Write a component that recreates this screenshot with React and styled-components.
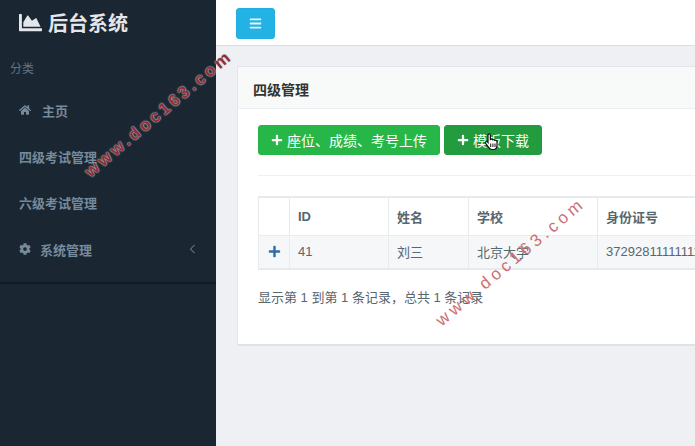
import React from 'react'
import styled, { createGlobalStyle } from 'styled-components'
import { FaChartArea, FaHome, FaCog, FaPlus, FaBars } from 'react-icons/fa'

const fontStack = '"Liberation Sans", "Noto Sans CJK SC", sans-serif'

const Global = createGlobalStyle`
  html, body { margin: 0; padding: 0; }
  body {
    width: 695px;
    height: 446px;
    overflow: hidden;
    font-family: ${fontStack};
    background: #eef0f3;
  }
  * { box-sizing: border-box; }
`

const Page = styled.div`
  position: relative;
  display: flex;
  width: 695px;
  height: 446px;
  overflow: hidden;
`

const Sidebar = styled.aside`
  width: 216px;
  flex: none;
  background: #1a2631;
`
const Brand = styled.div`
  display: flex;
  align-items: center;
  height: 44px;
  padding-left: 19px;
  color: #e3e7ec;
  font-size: 20px;
  font-weight: 700;
  gap: 6px;
  svg { font-size: 23px; }
`
const NavLabel = styled.div`
  padding: 15px 0 0 10px;
  height: 43px;
  font-size: 12px;
  color: #5e7384;
`
const Nav = styled.nav`
  border-bottom: 2px solid #131c25;
  padding-bottom: 10px;
`
const NavItem = styled.div`
  display: flex;
  align-items: center;
  height: 46.3px;
  padding: 0 20px 0 19px;
  font-size: 13px;
  font-weight: 700;
  color: #768a9c;
`
const NavIcon = styled.span`
  display: flex;
  flex: none;
  font-size: 12px;
  margin-right: ${p => p.$gap}px;
`
const Caret = styled.svg`
  margin-left: auto;
`

const Main = styled.main`
  flex: 1;
  min-width: 0;
`
const Topbar = styled.header`
  height: 46px;
  background: #fff;
  border-bottom: 1px solid #dcdfe2;
  padding: 8px 0 0 20px;
`
const MenuButton = styled.button`
  display: flex;
  align-items: center;
  justify-content: center;
  width: 39px;
  height: 31px;
  padding: 0;
  border: 1px solid #23ade0;
  border-radius: 3px;
  background: #23b2e4;
  color: #e6f7fc;
  font-size: 13px;
`
const Content = styled.div`
  padding: 20px 0 0 21px;
`
const Card = styled.section`
  width: 480px;
  height: 280px;
  background: #fff;
  border: 1px solid #e4e7ea;
  border-right: 0;
  border-bottom: 2px solid #dfe2e6;
  border-radius: 2px 0 0 2px;
  overflow: hidden;
`
const CardHead = styled.div`
  display: flex;
  align-items: center;
  height: 42px;
  padding: 3px 0 0 15px;
  background: #f8f9f9;
  border-bottom: 1px solid #edf0f2;
  font-size: 14px;
  font-weight: 700;
  color: #333;
`
const CardBody = styled.div`
  padding: 16px 0 0 20px;
`
const Toolbar = styled.div`
  display: flex;
  gap: 4px;
  padding-bottom: 20px;
  border-bottom: 1px solid #eef0f2;
`
const GreenButton = styled.button`
  display: flex;
  align-items: center;
  height: 30px;
  padding: 0 12px;
  border: 1px solid ${p => p.$hover ? '#249a3f' : '#27b348'};
  border-radius: 3px;
  background: ${p => p.$hover ? '#239b3f' : '#27b748'};
  color: #fff;
  font-family: ${fontStack};
  font-size: 14px;
  white-space: nowrap;
  svg { font-size: 12px; margin-right: 4px; }
`
const Table = styled.table`
  margin-top: 20px;
  border-collapse: collapse;
  table-layout: fixed;
  width: 460px;
  border-bottom: 2px solid #e6eaee;
  color: #58666e;
  font-size: 13px;
`
const Th = styled.th`
  height: 38px;
  padding: 0 8px;
  text-align: left;
  font-size: 13px;
  font-weight: 700;
  border: 1px solid #e8ebee;
  border-top-width: 2px;
  border-right: ${p => p.$last ? 0 : '1px solid #e8ebee'};
  color: #58666e;
  width: ${p => p.$w}px;
`
const Td = styled.td`
  height: 34px;
  padding: 0 8px;
  white-space: nowrap;
  overflow: hidden;
  background: #f6f7f8;
  border: 1px solid #e8ebee;
  border-right: ${p => p.$last ? 0 : '1px solid #e8ebee'};
`
const Expand = styled(Td)`
  color: #2f6ea5;
  text-align: center;
  padding: 0;
  font-size: 13px;
  line-height: 0;
`
const Summary = styled.div`
  margin-top: 17px;
  font-size: 13px;
  color: #58666e;
`

const Watermark = styled.div`
  position: absolute;
  left: ${p => p.$x}px;
  top: ${p => p.$y}px;
  width: 200px;
  text-align: center;
  transform: rotate(-40deg);
  font-family: "Liberation Sans", sans-serif;
  font-size: 17px;
  font-weight: ${p => p.$boxed ? 700 : 400};
  letter-spacing: ${p => p.$boxed ? 3.2 : 4}px;
  white-space: nowrap;
  color: ${p => p.$boxed ? '#8f2f36' : '#cc6f72'};
  text-shadow: ${p => p.$boxed ? '0 0 2px #c3c7cb, 0 0 1px #c3c7cb' : 'none'};
  pointer-events: none;
`
const HandCursor = styled.svg`
  position: absolute;
  left: 484px;
  top: 132px;
`

export default function App() {
  return (
    <Page>
      <Global />
      <Sidebar>
        <Brand><FaChartArea />后台系统</Brand>
        <NavLabel>分类</NavLabel>
        <Nav>
          <NavItem><NavIcon $gap={11}><FaHome /></NavIcon>主页</NavItem>
          <NavItem>四级考试管理</NavItem>
          <NavItem>六级考试管理</NavItem>
          <NavItem>
            <NavIcon $gap={9}><FaCog /></NavIcon>系统管理
            <Caret width="7" height="10" viewBox="0 0 7 10" fill="none">
              <path d="M5.500 1 1.500 5l4 4" stroke="#8095a8" strokeWidth="1" />
            </Caret>
          </NavItem>
        </Nav>
      </Sidebar>
      <Main>
        <Topbar>
          <MenuButton><FaBars /></MenuButton>
        </Topbar>
        <Content>
          <Card>
            <CardHead>四级管理</CardHead>
            <CardBody>
              <Toolbar>
                <GreenButton><FaPlus />座位、成绩、考号上传</GreenButton>
                <GreenButton $hover><FaPlus />模板下载</GreenButton>
              </Toolbar>
              <Table>
                <thead>
                  <tr>
                    <Th $w={31} />
                    <Th $w={99}>ID</Th>
                    <Th $w={80}>姓名</Th>
                    <Th $w={129}>学校</Th>
                    <Th $w={121} $last>身份证号</Th>
                  </tr>
                </thead>
                <tbody>
                  <tr>
                    <Expand><FaPlus /></Expand>
                    <Td>41</Td>
                    <Td>刘三</Td>
                    <Td>北京大学</Td>
                    <Td $last>372928111111111</Td>
                  </tr>
                </tbody>
              </Table>
              <Summary>显示第 1 到第 1 条记录，总共 1 条记录</Summary>
            </CardBody>
          </Card>
        </Content>
      </Main>
      <Watermark $x={59} $y={104} $boxed>www.doc163.com</Watermark>
      <Watermark $x={411} $y={252}>www.doc163.com</Watermark>
      <HandCursor width="16" height="19" viewBox="0 0 16 19">
        <path d="M4 3c0-1.600 2.400-1.600 2.400 0v4.500c.8-.7 2-.5 2.300.3.800-.5 2-.3 2.200.6.800-.4 2.100-.1 2.100 1.100V13c0 2.800-1.500 4.500-3.600 4.500H7.800c-1.500 0-2.500-.8-3.200-2.100L1.600 11.300c-.8-1.300.9-2.600 2-1.400l.4.600z" fill="#fff" stroke="#111" strokeWidth="1.200" />
        <path d="M6.700 11.500v3.500M8.900 11.500v3.500M11 11.500v3.500" stroke="#111" strokeWidth="1" />
      </HandCursor>
    </Page>
  )
}
